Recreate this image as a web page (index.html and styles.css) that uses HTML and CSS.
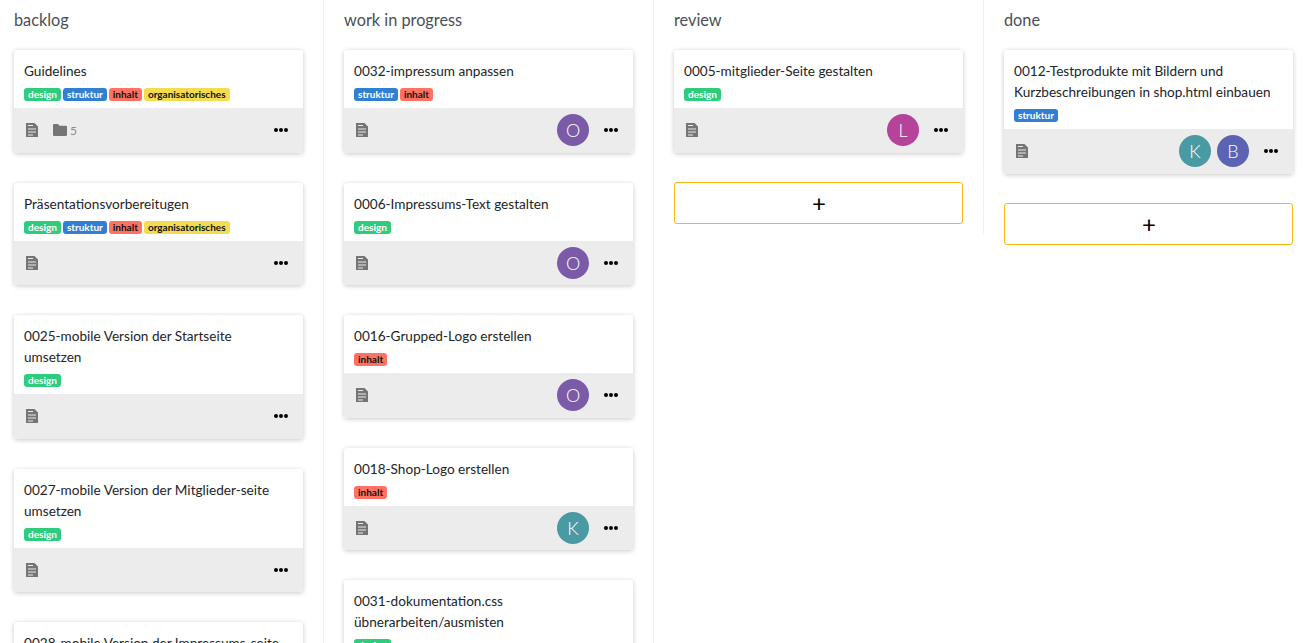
FILE: index.html
```html
<!DOCTYPE html>
<html lang="en">
<head>
  <meta charset="UTF-8">
  <title>board</title>
  <link rel="stylesheet" href="styles.css">
</head>
<body>
<svg class="defs" width="0" height="0">
  <symbol id="doc" viewBox="0 0 12 14"><path fill-rule="evenodd" d="M0 0h8.500L12 3.500V14H0zM2 2v1h5V2zM2 5.500v1h8v-1zM2 8.500v1h8v-1zM2 11.500v1h5v-1z"/></symbol>
  <symbol id="folder" viewBox="0 0 14 12"><path d="M0 1.200Q0 0 1.200 0H5l1.500 1.800h6.300Q14 1.800 14 3v8q0 1-1.200 1H1.200Q0 12 0 11z"/></symbol>
  <symbol id="dots" viewBox="0 0 14 4"><circle cx="2" cy="2" r="2"/><circle cx="7" cy="2" r="2"/><circle cx="12" cy="2" r="2"/></symbol>
</svg>

<div class="board">

  <div class="column">
    <h2>backlog</h2>
    <div class="card">
      <div class="card-body">
        <p>Guidelines</p>
        <div class="tags"><span class="tag design">design</span><span class="tag struktur">struktur</span><span class="tag inhalt">inhalt</span><span class="tag orga">organisatorisches</span></div>
      </div>
      <div class="card-foot">
        <svg class="doc"><use href="#doc"/></svg>
        <svg class="folder"><use href="#folder"/></svg><span class="count">5</span>
        <svg class="dots"><use href="#dots"/></svg>
      </div>
    </div>
    <div class="card">
      <div class="card-body">
        <p>Präsentationsvorbereitugen</p>
        <div class="tags"><span class="tag design">design</span><span class="tag struktur">struktur</span><span class="tag inhalt">inhalt</span><span class="tag orga">organisatorisches</span></div>
      </div>
      <div class="card-foot">
        <svg class="doc"><use href="#doc"/></svg>
        <svg class="dots"><use href="#dots"/></svg>
      </div>
    </div>
    <div class="card">
      <div class="card-body">
        <p>0025-mobile Version der Startseite umsetzen</p>
        <div class="tags"><span class="tag design">design</span></div>
      </div>
      <div class="card-foot">
        <svg class="doc"><use href="#doc"/></svg>
        <svg class="dots"><use href="#dots"/></svg>
      </div>
    </div>
    <div class="card">
      <div class="card-body">
        <p>0027-mobile Version der Mitglieder-seite umsetzen</p>
        <div class="tags"><span class="tag design">design</span></div>
      </div>
      <div class="card-foot">
        <svg class="doc"><use href="#doc"/></svg>
        <svg class="dots"><use href="#dots"/></svg>
      </div>
    </div>
    <div class="card">
      <div class="card-body">
        <p>0028-mobile Version der Impressums-seite umsetzen</p>
        <div class="tags"><span class="tag design">design</span></div>
      </div>
    </div>
  </div>

  <div class="column">
    <h2>work in progress</h2>
    <div class="card">
      <div class="card-body">
        <p>0032-impressum anpassen</p>
        <div class="tags"><span class="tag struktur">struktur</span><span class="tag inhalt">inhalt</span></div>
      </div>
      <div class="card-foot">
        <svg class="doc"><use href="#doc"/></svg>
        <span class="avatar purple">O</span>
        <svg class="dots"><use href="#dots"/></svg>
      </div>
    </div>
    <div class="card">
      <div class="card-body">
        <p>0006-Impressums-Text gestalten</p>
        <div class="tags"><span class="tag design">design</span></div>
      </div>
      <div class="card-foot">
        <svg class="doc"><use href="#doc"/></svg>
        <span class="avatar purple">O</span>
        <svg class="dots"><use href="#dots"/></svg>
      </div>
    </div>
    <div class="card">
      <div class="card-body">
        <p>0016-Grupped-Logo erstellen</p>
        <div class="tags"><span class="tag inhalt">inhalt</span></div>
      </div>
      <div class="card-foot">
        <svg class="doc"><use href="#doc"/></svg>
        <span class="avatar purple">O</span>
        <svg class="dots"><use href="#dots"/></svg>
      </div>
    </div>
    <div class="card">
      <div class="card-body">
        <p>0018-Shop-Logo erstellen</p>
        <div class="tags"><span class="tag inhalt">inhalt</span></div>
      </div>
      <div class="card-foot">
        <svg class="doc"><use href="#doc"/></svg>
        <span class="avatar teal">K</span>
        <svg class="dots"><use href="#dots"/></svg>
      </div>
    </div>
    <div class="card">
      <div class="card-body">
        <p>0031-dokumentation.css übnerarbeiten/ausmisten</p>
        <div class="tags"><span class="tag design">design</span></div>
      </div>
    </div>
  </div>

  <div class="column">
    <h2>review</h2>
    <div class="card">
      <div class="card-body">
        <p>0005-mitglieder-Seite gestalten</p>
        <div class="tags"><span class="tag design">design</span></div>
      </div>
      <div class="card-foot">
        <svg class="doc"><use href="#doc"/></svg>
        <span class="avatar magenta">L</span>
        <svg class="dots"><use href="#dots"/></svg>
      </div>
    </div>
    <button class="add">+</button>
  </div>

  <div class="column">
    <h2>done</h2>
    <div class="card">
      <div class="card-body">
        <p>0012-Testprodukte mit Bildern und Kurzbeschreibungen in shop.html einbauen</p>
        <div class="tags"><span class="tag struktur">struktur</span></div>
      </div>
      <div class="card-foot">
        <svg class="doc"><use href="#doc"/></svg>
        <span class="avatar teal">K</span>
        <span class="avatar indigo">B</span>
        <svg class="dots"><use href="#dots"/></svg>
      </div>
    </div>
    <button class="add">+</button>
  </div>

</div>
</body>
</html>
```

FILE: styles.css
```css
html, body {
  margin: 0;
  height: 100%;
  overflow: hidden;
}

body {
  font-family: Lato, "Noto Sans", sans-serif;
  background: #fff;
  color: #212529;
}

.defs {
  display: block;
  height: 0;
}

.board {
  display: flex;
  align-items: flex-start;
}

.column {
  box-sizing: border-box;
  width: 330px;
  flex: none;
  padding: 0 19px 10px 20px;
  border-right: 1px solid #f1f1f1;
}

.column:first-child {
  width: 324px;
  padding-left: 14px;
}

.column:last-child {
  border-right: none;
}

.column:nth-child(-n+2) {
  min-height: 643px;
}

h2 {
  margin: 0;
  height: 50px;
  padding-top: 10px;
  box-sizing: border-box;
  font-size: 16.3px;
  font-weight: 400;
  line-height: 20px;
  color: #495057;
}

.card {
  width: 289px;
  margin-bottom: 30px;
  border-radius: 3px;
  overflow: hidden;
  background: #fff;
  box-shadow: 0 1px 5px rgba(0, 0, 0, 0.22);
}

.card-body {
  padding: 11px 14px 7px 10px;
}

.card-body p {
  margin: 0 0 6px;
  font-size: 13.6px;
  line-height: 21px;
  color: #212529;
}

.tags {
  display: flex;
  gap: 2px;
  height: 13px;
}

.tag {
  padding: 0 4px;
  border-radius: 3px;
  font-size: 10px;
  font-weight: 700;
  line-height: 13px;
  color: #fff;
}

.design { background: #2ecc7d; }
.struktur { background: #307fd1; }
.inhalt { background: #ff7262; color: #111; }
.orga { background: #f3dc4f; color: #111; }

.card-foot {
  display: flex;
  align-items: center;
  gap: 6px;
  height: 44.5px;
  padding: 0 15px 0 12px;
  background: #ececec;
}

.doc {
  width: 12px;
  height: 14px;
  fill: #757575;
}

.folder {
  width: 14px;
  height: 12px;
  margin-left: 9px;
  fill: #757575;
}

.count {
  margin-left: -3px;
  font-size: 12px;
  color: #8c8c8c;
}

.dots {
  width: 14px;
  height: 4px;
  margin-left: 9px;
  fill: #000;
}

.doc + .dots,
.count + .dots {
  margin-left: auto;
}

.avatar {
  width: 32px;
  height: 32px;
  border-radius: 50%;
  font-size: 18px;
  font-weight: 300;
  line-height: 32px;
  text-align: center;
  color: #fff;
}

.doc + .avatar {
  margin-left: auto;
}

.purple { background: #7b5aa8; }
.teal { background: #4a9aa3; }
.magenta { background: #b5439a; }
.indigo { background: #5a64b3; }

.add {
  display: block;
  box-sizing: border-box;
  width: 289px;
  height: 42px;
  margin-top: -1px;
  padding: 0 0 0 1px;
  border: 1px solid #f5b90f;
  border-radius: 3px;
  background: #fff;
  font-family: inherit;
  font-size: 24px;
  font-weight: 400;
  line-height: 38px;
  color: #000;
}
```
